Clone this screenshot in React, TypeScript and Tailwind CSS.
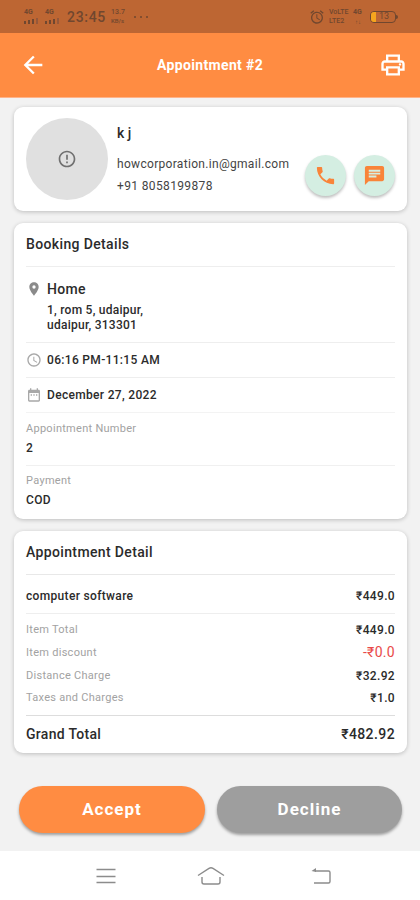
import React from 'react';
import { MdArrowBack, MdOutlinePrint, MdErrorOutline, MdPhone, MdChat, MdLocationOn, MdAccessTime, MdDateRange, MdAlarm } from 'react-icons/md';

const cardClass = 'ml-[14px] mr-[13px] rounded-[9px] bg-white px-3 shadow-[0_1px_4px_rgba(0,0,0,0.22)]';

function SignalBars() {
  return (
    <div className="mt-[2px] flex h-[6px] w-[14px] items-end gap-[2px]">
      <i className="h-[3px] w-[2px] bg-[#70472f]" />
      <i className="h-[4px] w-[2px] bg-[#70472f]" />
      <i className="h-[5px] w-[2px] bg-[#70472f]" />
      <i className="h-[6px] w-[2px] bg-[#96583a]" />
    </div>
  );
}

function StatusBar() {
  return (
    <div className="flex h-[33px] items-center bg-[#bd6633] pl-[24px] pr-[22px] text-[#70472f]">
      <div className="flex w-[21px] flex-col">
        <span className="text-[7px] font-bold leading-[7px]">4G</span>
        <SignalBars />
      </div>
      <div className="flex w-[22px] flex-col">
        <span className="text-[7px] font-bold leading-[7px]">4G</span>
        <SignalBars />
      </div>
      <span className="w-[44px] pt-px text-[14px] font-medium tracking-[0.7px]">23:45</span>
      <div className="flex w-[23px] flex-col text-[7px] font-medium leading-[9px]">
        <span>13.7</span>
        <span className="text-[6px] leading-[8px]">KB/s</span>
      </div>
      <div className="flex gap-[4px]">
        <i className="size-[2px] rounded-full bg-[#70472f]" />
        <i className="size-[2px] rounded-full bg-[#70472f]" />
        <i className="size-[2px] rounded-full bg-[#70472f]" />
      </div>
      <MdAlarm className="ml-auto size-[16px]" />
      <div className="ml-[4px] flex w-[24px] flex-col text-[7px] font-medium leading-[9px]">
        <span>VoLTE</span>
        <span>LTE2</span>
      </div>
      <div className="flex w-[17px] flex-col text-[7px] font-bold leading-[9px]">
        <span>4G</span>
        <span className="pl-[2px] text-[6px]">↑↓</span>
      </div>
      <div className="flex h-[12px] w-[26px] items-center overflow-hidden rounded-[4px] border border-[#70472f]">
        <i className="h-full w-[5px] bg-[#f5a51e]" />
        <span className="pl-[3px] text-[9px] leading-none">13</span>
      </div>
      <i className="h-[4px] w-[2px] rounded-r bg-[#70472f]" />
    </div>
  );
}

function Row({ label, value, size }: { label: string; value: string; size: string }) {
  return (
    <div className={'flex items-center justify-between ' + size}>
      <span className="pt-px text-[11px] tracking-[0.28px] text-[#a2a2a2]">{label}</span>
      {value.startsWith('-') ? (
        <span className="text-[14px] tracking-[0.3px] text-[#e94a49]">{value}</span>
      ) : (
        <span className="text-[12px] font-medium tracking-[0.35px]">{value}</span>
      )}
    </div>
  );
}

export default function App() {
  return (
    <div className="h-[900px] w-[420px] overflow-hidden bg-[#f2f2f2] font-['Roboto','Noto_Sans',sans-serif] text-[#2b2b2b]">
      <StatusBar />
      <header className="grid h-[65px] grid-cols-[60px_1fr_60px] items-center border-b border-[#ffb38a] bg-[#ff8c42] text-white">
        <MdArrowBack className="ml-[19px] size-[28px]" />
        <h1 className="pt-px text-center text-[14px] font-bold tracking-[0.35px]">Appointment #2</h1>
        <MdOutlinePrint className="ml-[19px] size-[28px]" />
      </header>

      <section className={cardClass + ' mt-[9px] flex h-[104px] pt-[11px]'}>
        <div className="flex size-[82px] shrink-0 items-center justify-center rounded-full bg-[#e0e0e0] text-[#707070]">
          <MdErrorOutline className="size-[20px]" />
        </div>
        <div className="ml-[9px] flex w-[188px] shrink-0 flex-col whitespace-nowrap pt-[5px]">
          <span className="h-[20px] text-[14px] font-medium leading-[20px]">k j</span>
          <span className="mt-[10px] h-[22px] text-[12px] leading-[22px] tracking-[0.31px] text-[#444444]">howcorporation.in@gmail.com</span>
          <span className="h-[22px] text-[12px] leading-[22px] tracking-[0.36px] text-[#444444]">+91 8058199878</span>
        </div>
        <div className="flex gap-[8px] pt-[37px] text-[#f98439]">
          <div className="flex size-[41px] shrink-0 items-center justify-center rounded-full bg-[#d4eee2] shadow-[0_2px_3px_rgba(0,0,0,0.25)]">
            <MdPhone className="size-[23px]" />
          </div>
          <div className="flex size-[41px] shrink-0 items-center justify-center rounded-full bg-[#d4eee2] shadow-[0_2px_3px_rgba(0,0,0,0.25)]">
            <MdChat className="size-[23px]" />
          </div>
        </div>
      </section>

      <section className={cardClass + ' mt-[12px] h-[296px]'}>
        <h2 className="h-[44px] border-b border-[#eeeeee] text-[14px] font-medium leading-[42px] tracking-[0.36px]">Booking Details</h2>
        <div className="flex h-[76px] border-b border-[#eeeeee] pt-[12px]">
          <MdLocationOn className="mt-[2px] size-[16px] text-[#8a8a8a]" />
          <div className="ml-[5px]">
            <div className="h-[24px] text-[14px] font-medium leading-[21px] tracking-[0.3px]">Home</div>
            <div className="text-[12px] font-medium leading-[15px] tracking-[0.25px]">1, rom 5, udaipur,<br />udaipur, 313301</div>
          </div>
        </div>
        <div className="flex h-[35px] items-center gap-[5px] border-b border-[#eeeeee]">
          <MdAccessTime className="size-[16px] text-[#a8a8a8]" />
          <span className="text-[12px] font-medium tracking-[0.32px]">06:16 PM-11:15 AM</span>
        </div>
        <div className="flex h-[35px] items-center gap-[5px] border-b border-[#f3f3f3]">
          <MdDateRange className="size-[16px] text-[#a8a8a8]" />
          <span className="text-[12px] font-medium tracking-[0.32px]">December 27, 2022</span>
        </div>
        <div className="h-[53px] border-b border-[#f0f0f0] pt-[5px]">
          <div className="h-[20px] text-[11px] leading-[21px] tracking-[0.28px] text-[#a2a2a2]">Appointment Number</div>
          <div className="text-[12px] font-medium leading-[20px]">2</div>
        </div>
        <div className="pt-[4px]">
          <div className="h-[20px] text-[11px] leading-[21px] tracking-[0.3px] text-[#a2a2a2]">Payment</div>
          <div className="text-[12px] font-medium leading-[20px] tracking-[0.3px]">COD</div>
        </div>
      </section>

      <section className={cardClass + ' mt-[12px] h-[222px]'}>
        <h2 className="h-[44px] border-b border-[#e8e8e8] text-[14px] font-medium leading-[42px] tracking-[0.36px]">Appointment Detail</h2>
        <div className="flex h-[39px] items-center justify-between border-b border-[#eeeeee] pt-[3px] text-[12px] font-medium">
          <span className="tracking-[0.33px]">computer software</span>
          <span className="tracking-[0.35px]">₹449.0</span>
        </div>
        <div className="h-[102px] border-b border-[#dddddd] pt-[4px]">
          <Row label="Item Total" value="₹449.0" size="h-[23px]" />
          <Row label="Item discount" value="-₹0.0" size="h-[23px]" />
          <Row label="Distance Charge" value="₹32.92" size="h-[23px]" />
          <Row label="Taxes and Charges" value="₹1.0" size="h-[22px]" />
        </div>
        <div className="flex h-[36px] items-center justify-between text-[14px] font-medium">
          <span className="tracking-[0.3px]">Grand Total</span>
          <span className="tracking-[0.4px]">₹482.92</span>
        </div>
      </section>

      <div className="mt-[33px] flex h-[65px] gap-[12px] px-[19px] text-[17px] font-bold tracking-[1px] text-white">
        <button className="h-[47px] w-[186px] shrink-0 rounded-full bg-[#ff8c42] shadow-[0_2px_3px_rgba(0,0,0,0.35)]">Accept</button>
        <button className="h-[47px] w-[185px] shrink-0 rounded-full bg-[#9e9e9e] shadow-[0_2px_3px_rgba(0,0,0,0.35)]">Decline</button>
      </div>

      <nav className="flex h-[49px] items-center bg-white pl-[96px] text-[#8c8c8c]">
        <svg className="h-[20px] w-[20px]" viewBox="0 0 20 20" fill="none" stroke="currentColor" strokeWidth="1.4">
          <path d="M0.5 3.5H19.5M0.5 10.5H19.5M0.5 16.5H19.5" />
        </svg>
        <svg className="ml-[81px] h-[20px] w-[28px]" viewBox="0 0 28 20" fill="none" stroke="currentColor" strokeWidth="1.4">
          <path d="M1 9.5L12 2.4Q14 1.2 16 2.4L27 9.5M5 11V16Q5 18 7 18H21Q23 18 23 16V11" />
        </svg>
        <svg className="ml-[86px] h-[20px] w-[20px]" viewBox="0 0 20 20" fill="none" stroke="currentColor" strokeWidth="1.4">
          <path d="M4 5H17.5Q19 5 19 6.5V15.5Q19 17 17.5 17H3" />
          <path d="M0.5 5L5 2V6Z" fill="currentColor" stroke="none" />
        </svg>
      </nav>
    </div>
  );
}
